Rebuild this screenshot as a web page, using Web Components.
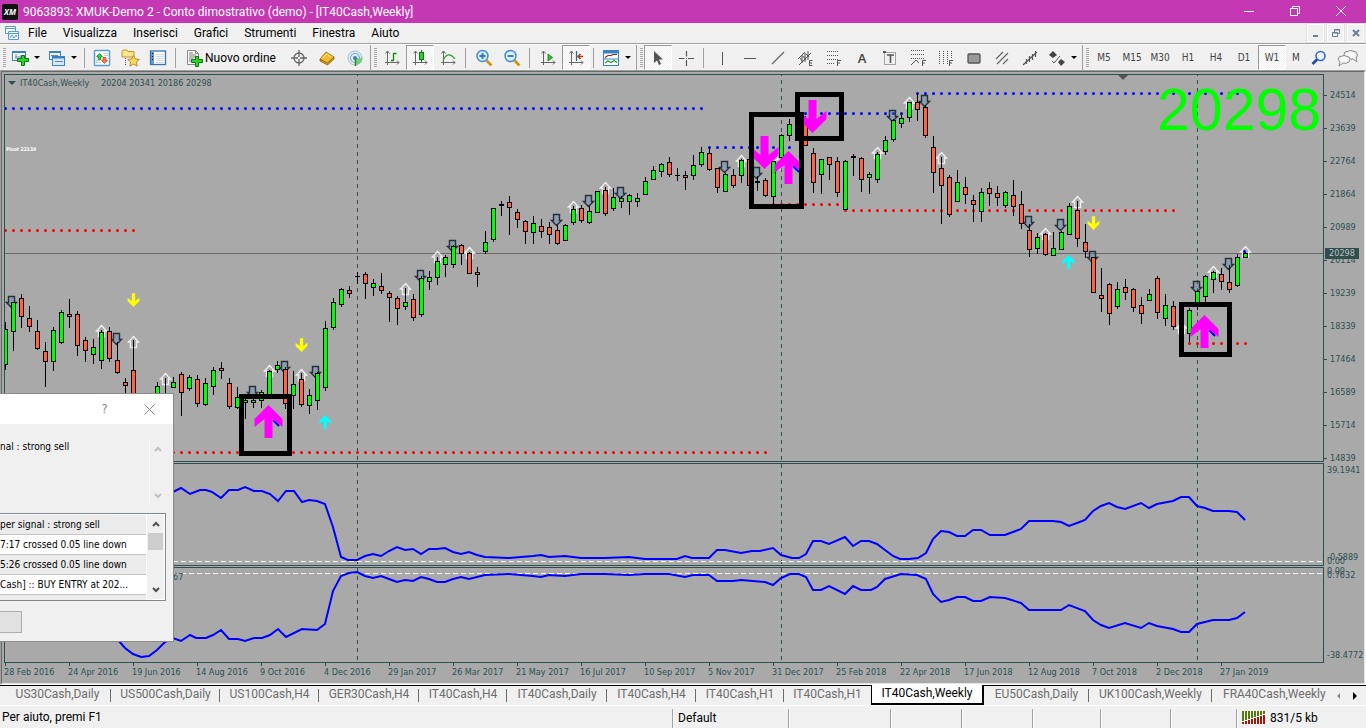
<!DOCTYPE html>
<html lang="it">
<head>
<meta charset="utf-8">
<title>9063893: XMUK-Demo 2 - Conto dimostrativo (demo)</title>
<style>
html,body{margin:0;height:100%}
body{background:#f0f0f0;font:12px/16px Roboto,"Open Sans",sans-serif;color:#000;overflow:hidden}
</style>
</head>
<body>
<terminal-app></terminal-app>
<script>
const element=(name,css,html,setup)=>customElements.define(name,class extends HTMLElement{
  connectedCallback(){
    if(this.shadowRoot)return;
    const t=document.createElement('template');
    t.innerHTML='<style>*{box-sizing:border-box}button{font:inherit;color:inherit;background:none;border:0;padding:0;margin:0}svg{display:block}'+css+'</style>'+(typeof html==='function'?html(this):html);
    this.attachShadow({mode:'open'}).append(t.content.cloneNode(true));
    if(setup)setup(this,this.shadowRoot);
  }
});

/* ---------- icons ---------- */
const AX='<path d="M3.5 1v14M1 12.5h14M1.500 3.500 3.500 1l2 2.500M13 10.500l2 2-2 2" fill="none" stroke="#666"/>';
const icons={
newchart:'<rect x=".5" y="1.500" width="13" height="9" fill="#fff" stroke="#3b7fc4"/><path d="M1 2h12" stroke="#3b7fc4" stroke-width="2"/><path d="M3 7h8M4 4v5M9 5v3" stroke="#5b8ab5"/><path d="M9.500 5.500h3v3h4v3h-4v4h-3v-4h-4v-3h4z" fill="#2ed32e" stroke="#0b7a0b"/>',
profiles:'<rect x=".5" y="1.500" width="11" height="8" fill="#eaf4fd" stroke="#3b7fc4"/><path d="M1 2h10" stroke="#3b7fc4" stroke-width="2"/><rect x="3.500" y="6.500" width="12" height="9" fill="#d7eafa" stroke="#3b7fc4"/><path d="M4 7.500h11" stroke="#3b7fc4" stroke-width="2"/><path d="M6 11.500h8M2 5.500h7" stroke="#5b8ab5"/>',
market:'<rect x=".5" y=".5" width="15" height="15" rx="1" fill="#fff" stroke="#5a9bd8" stroke-width="1.500"/><path d="M9 3.500h5M10 5.500h4M2 10.500h4M2 12.500h5" stroke="#bcd"/><path d="M5.500 3.500 8.500 6.500H7v3H4v-3H2.500z" fill="#2ecc2e" stroke="#0b7a0b" stroke-width=".6"/><path d="M10.500 13.500 7.500 10.500H9v-3h3v3h1.500z" fill="#ff7a3c" stroke="#a32a00" stroke-width=".6"/>',
star:'<path d="M0 1.500Q0 0 1.500 0H5l1 1.500h6V7H0z" fill="#ffe58a" stroke="#b8962e"/><path d="M3.500 8v8" stroke="#555" stroke-dasharray="1 1"/><path d="M11.500 5.500l1.900 3.500 3.900.5-2.900 2.600.8 4-3.700-2-3.700 2 .8-4L5.700 9.500 9.600 9z" fill="#ffd75a" stroke="#a87a10" stroke-width=".8"/>',
navigator:'<rect x=".5" y="1" width="15" height="13.500" fill="#fff" stroke="#3a72a8" stroke-width="1.300"/><path d="M2.500 2v12" stroke="#5f9bd8" stroke-width="3"/><path d="M6 4.500h8M6 6.500h8M6 8.500h8M6 10.500h8M6 12.500h8" stroke="#cfdbe8"/><path d="M2.500 3v9" stroke="#000" stroke-dasharray="1 2"/>',
order:'<path d="M1.500.5h8l3 3v11h-11z" fill="#fff" stroke="#888"/><path d="M9.500.5v3h3" fill="none" stroke="#888"/><path d="M3 5h7M3 7h7M3 9h4M3 11h4M3 3h4" stroke="#777"/><path d="M9.500 6.500h3v3h4v3h-4v4h-3v-4h-4v-3h4z" fill="#2ed32e" stroke="#0b7a0b"/>',
target:'<circle cx="8" cy="8" r="5" fill="none" stroke="#666" stroke-width="1.300"/><path d="M8 0v7M8 9v7M0 8h7M9 8h7" stroke="#666" stroke-width="1.300"/>',
book:'<path d="M1 9 7 2l8 5-6.500 7z" fill="#f1bb35" stroke="#b07a10"/><path d="M1 9v2l7.500 4L15 9V7l-6.500 6z" fill="#d49a28" stroke="#8a5c06" stroke-width=".8"/><path d="M3 8.500 7.500 4l5 3" fill="none" stroke="#ffe49a"/>',
signal:'<circle cx="8" cy="8" r="7" fill="#dfeaf2" stroke="#a3bfd6"/><circle cx="8" cy="8" r="4.500" fill="none" stroke="#7fb0d4" stroke-width="1.200"/><path d="M9 8h6.500A7 7 0 0 1 9 15z" fill="#7cc87c"/><circle cx="8" cy="8" r="2" fill="#3b7fbf"/><path d="M8.500 9v7" stroke="#2b8a2b" stroke-width="1.500"/>',
bars:AX+'<path d="M9.500 3v8M9.500 3.500h3M7 10.500h2.500" stroke="#0a8a0a" stroke-width="1.300"/>',
candles:AX+'<path d="M9.500 0v12" stroke="#0a7a0a"/><rect x="7.500" y="2.500" width="4" height="7" fill="#2ed32e" stroke="#0a7a0a"/>',
line:AX+'<path d="M3 10.500Q8 0 15 9" fill="none" stroke="#2a9a2a" stroke-width="1.200"/>',
zoomin:'<circle cx="6.500" cy="6" r="5.500" fill="#d6efff" stroke="#3f87cc" stroke-width="1.400"/><path d="m10.500 10.500 5 5" stroke="#c79a1b" stroke-width="2.800"/><path d="M6.500 3v6M3.500 6h6" stroke="#2f77bd" stroke-width="1.800"/>',
zoomout:'<circle cx="6.500" cy="6" r="5.500" fill="#d6efff" stroke="#3f87cc" stroke-width="1.400"/><path d="m10.500 10.500 5 5" stroke="#c79a1b" stroke-width="2.800"/><path d="M3.500 6h6" stroke="#2f77bd" stroke-width="1.800"/>',
scroll:AX+'<path d="M8 4v7l4.500-3.500z" fill="#35c435" stroke="#0a7a0a" stroke-width=".8"/>',
shift:AX+'<path d="M8.500 1v10" stroke="#1c6a9e" stroke-width="1.300"/><path d="M15 6.500h-5M12.500 4 10 6.500 12.500 9" stroke="#b33a10" fill="none" stroke-width="1.500"/>',
template:'<rect x=".5" y=".5" width="15" height="15" fill="#fff" stroke="#3b7fc4"/><path d="M0 2h16" stroke="#3b7fc4" stroke-width="3"/><path d="M1 9h14" stroke="#3b7fc4"/><path d="M2 7.500l3-2h3l2-1h4" fill="none" stroke="#8a2a10" stroke-width="1.200"/><path d="M2 13l3-2 3 1.500 3-2 3 2" fill="none" stroke="#1c9a1c" stroke-width="1.200"/>',
cursor:'<path d="M4 1v12l3-2.500 2 4.500 2-1-2-4.500h4z" fill="#555"/>',
cross:'<path d="M8.500 1v5.500M8.500 10v6M1 8.500h5.500M10 8.500h6M8 8.500h1" stroke="#555" stroke-width="1.200"/>',
vline:'<path d="M8.500 2v13" stroke="#555"/>',
hline:'<path d="M2 8.500h12" stroke="#555"/>',
trend:'<path d="m2 14 12-12" stroke="#666" stroke-width="1.300"/>',
channel:'<path d="M0 9 7 2M1 15 13 3M4 5v8M7 3v9M10 1v9M2 8l3 4M5 6l3 4M8 4l3 3" stroke="#555" fill="none"/><path d="M14.500 10.500h-3v5h3M11.500 13h2.500" fill="none" stroke="#555"/>',
fibo:'<path d="M1 1.500h12M1 5.500h12M1 9.500h12M1 13.500h8" stroke="#555" stroke-dasharray="1 1"/><path d="M11.500 16v-5.500h3.500M11.500 13h2.500" fill="none" stroke="#555"/>',
label:'<path d="M2.500 2.500h11v12h-11z" fill="none" stroke="#555" stroke-dasharray="1 1"/><path d="M5 5h7M8.500 5v8" stroke="#555" stroke-width="1.600"/><path d="M1 1h3v2H1z" fill="#555"/>',
fan:'<path d="M1 .5h14M1 4.500h14M1 8.500h14" stroke="#555" stroke-dasharray="1 1"/><path d="m1 15 5-5 3 3M12.500 16v-5.500h3.500M12.500 13h2.500" fill="none" stroke="#555"/>',
fibtime:'<path d="M1.500 1v14M5.500 1v14M9.500 1v14M13.500 1v8" stroke="#555" stroke-dasharray="1 1"/><path d="M11.500 16v-5.500h3.500M11.500 13h2.500" fill="none" stroke="#555"/>',
rect:'<rect x="2" y="4" width="12" height="9" rx="1" fill="#999" stroke="#555" stroke-width="1.300"/>',
hatch:'<path d="m2 9 7-7M3 14 14 3M9 14l5-5" stroke="#666" stroke-width="1.200"/>',
andrews:'<path d="M1 15 15 2M4.500 9v5M7.500 6v6M10.500 4v6M13.500 1v6" stroke="#555" fill="none" stroke-width="1.200"/>',
arrows:'<path d="m4 1 4 4-4 3-4-3zM12 9l4 3-4 4-3-4z" fill="#444"/><path d="m3 11 2 2 6-7" fill="none" stroke="#555"/>',
search:'<circle cx="9.500" cy="6" r="4.500" fill="#eef4ff" stroke="#3568c8" stroke-width="1.600"/><path d="M6 9.500 1.500 14" stroke="#1b48ae" stroke-width="2.600"/>',
chat:'<path d="M8 2q6-3 11 0 3 3 0 6l1 4-4-3q-5 1-8-2-2-3 0-5z" fill="#f6f6f6" stroke="#888"/><path d="M2 7q5-3 10 0 2 3 0 5-3 2-6 1l-4 3 1-4q-3-2-1-5z" fill="#fafafa" stroke="#888"/>'
};
const icon=(n,w=16)=>`<svg width="${w}" height="16" viewBox="0 0 ${w} 16" overflow="visible" aria-hidden="true">${icons[n]}</svg>`;

/* ---------- window title and menu ---------- */
element('title-bar',`:host{display:flex;height:23px;background:#c538b4;color:#fff;align-items:center;padding-left:2px}
.logo{width:16px;height:16px;background:#111;border-radius:2px;color:#fff;font:italic bold 8px/16px "Open Sans",sans-serif;text-align:center;margin-right:5px}
h1{font:inherit;margin:0;flex:1;white-space:nowrap}nav{display:flex;margin:0 2px 2px 0}button{width:46px;height:20px;display:grid;place-items:center}`,
`<span class="logo">XM</span><h1>9063893: XMUK-Demo 2 - Conto dimostrativo (demo) - [IT40Cash,Weekly]</h1>
<nav><button aria-label="Riduci"><svg width="10" height="10"><path d="M0 5.500h10" stroke="#fff"/></svg></button>
<button aria-label="Ripristina"><svg width="10" height="10" fill="none" stroke="#fff"><path d="M.5 2.500h7v7h-7zM2.500 2.500v-2h7v7h-2"/></svg></button>
<button aria-label="Chiudi"><svg width="10" height="10"><path d="m0 0 10 10M10 0 0 10" stroke="#fff"/></svg></button></nav>`);

element('menu-bar',`:host{display:flex;height:20px;align-items:center;padding-left:5px}
nav{display:flex;gap:16px;flex:1;margin-left:9px}.mdi{display:flex;gap:3px;padding-right:2px}.mdi button{width:17px;height:18px;border:1px solid #fff;background:#f0f0f0;display:grid;place-items:center;box-shadow:0 0 0 1px #e3e3e3}`,
`<svg width="14" height="14" fill="none" stroke="#5b9bd5"><path d="M.5.5h10v7H.5zM.500 2.500h10" fill="#fff"/><path d="M3.500 5.500h10v8h-10zM3.500 7.500h10" fill="#eef6ff"/><path d="m5 12 2-3 2 3 2-3 1 2"/></svg>
<nav><button>File</button><button>Visualizza</button><button>Inserisci</button><button>Grafici</button><button>Strumenti</button><button>Finestra</button><button>Aiuto</button></nav>
<div class="mdi"><button aria-label="Riduci grafico"><svg width="8" height="8"><path d="M1 7h5" stroke="#6b7f93" stroke-width="2"/></svg></button>
<button aria-label="Ripristina grafico"><svg width="8" height="8" fill="none" stroke="#6b7f93"><path d="M.5 3.500h5v4h-5zM.500 4h5M2.500 3V.5h5v4H6M2.500 1h5"/></svg></button>
<button aria-label="Chiudi grafico"><svg width="8" height="8"><path d="m1 1 6 6M7 1 1 7" stroke="#6b7f93" stroke-width="2"/></svg></button></div>`);

/* ---------- toolbar ---------- */
element('tool-button',`:host{display:block;width:28px;height:25px}:host([menu]){width:37px}:host([wide]){width:106px}
button{width:100%;height:100%;display:flex;align-items:center;justify-content:center;gap:6px;color:#444;white-space:nowrap}
:host([menu]) button:after{content:"";border:3px solid transparent;border-top-color:#000;border-bottom:0}
:host([wide]) button{color:#000;gap:3px;justify-content:start;padding-left:7px}
:host([pressed]) button{border:1px solid #999;border-right-color:#fff;border-bottom-color:#fff;background:repeating-conic-gradient(#f0f0f0 0 25%,#fff 0 50%) 0 0/2px 2px}`,
`<button><slot></slot></button>`,(h,r)=>{r.querySelector('button').setAttribute('aria-label',h.getAttribute('label')||h.textContent.trim());
 if(h.hasAttribute('pressed'))r.querySelector('button').setAttribute('aria-pressed','true')});
const tb=(n,label,attr='')=>`<tool-button label="${label}" ${attr}>${icon(n)}</tool-button>`;
const tf=(n,attr='')=>`<tool-button ${attr}>${n}</tool-button>`;
element('tool-bar',`:host{display:flex;height:27px;border-top:1px solid #a0a0a0;box-shadow:inset 0 1px #fff;padding-top:1px;overflow:hidden}
section{display:flex;align-items:center;border-right:1px solid #a0a0a0;padding-right:1px;flex:none}
section:last-child{border:0;flex:1}
.grip{width:3px;height:19px;margin:0 1px 0 3px;background:repeating-linear-gradient(#aaa 0 1px,#f0f0f0 1px 2px)}
i{width:1px;height:20px;background:#a0a0a0;margin:0 3px}section~section i{margin-right:4px}
.tf{font:10px/12px "DejaVu Sans Condensed","DejaVu Sans",sans-serif;display:flex}
.end{display:flex;flex:1;justify-content:space-between;padding-right:6px;padding-left:2px}.end tool-button{width:22px}.clip{width:20px}b{font:13px/16px "Open Sans",sans-serif;font-weight:600}`,
`<section><span class="grip"></span>${tb('newchart','Nuovo grafico','menu')}${tb('profiles','Profili','menu')}<i></i>${tb('market','Market Watch')}${tb('star','Preferiti')}${tb('navigator','Navigatore')}<i></i>
<tool-button wide label="Nuovo ordine">${icon('order')}<span>Nuovo ordine</span></tool-button>${tb('target','Mirino')}${tb('book','Storico')}${tb('signal','Segnali')}</section>
<section><span class="grip"></span>${tb('bars','Barre')}${tb('candles','Candele','pressed')}${tb('line','Linea')}<i></i>${tb('zoomin','Ingrandisci')}${tb('zoomout','Riduci')}<i></i>${tb('scroll','Scorrimento')}${tb('shift','Spostamento','pressed')}<i></i>${tb('template','Modelli','menu')}</section>
<section><span class="grip"></span>${tb('cursor','Cursore','pressed')}${tb('cross','Croce')}<i></i>${tb('vline','Linea verticale')}${tb('hline','Linea orizzontale')}${tb('trend','Linea di tendenza')}${tb('channel','Canale')}${tb('fibo','Fibonacci')}<tool-button><b>A</b></tool-button>${tb('label','Etichetta')}${tb('fan','Ventaglio')}${tb('fibtime','Tempo Fibonacci')}${tb('rect','Rettangolo')}${tb('hatch','Canali')}${tb('andrews','Andrews')}${tb('arrows','Frecce','menu')}</section>
<section><span class="grip"></span><div class="tf">${tf('M5')}${tf('M15')}${tf('M30')}${tf('H1')}${tf('H4')}${tf('D1')}${tf('W1','pressed')}<tool-button class="clip">M</tool-button></div><div class="end">${tb('search','Cerca')}<tool-button label="Chat">${icon('chat',22)}</tool-button></div></section>`);

/* ---------- chart data: [open side, high, body top, body bottom, low], one bar every 8px ---------- */
const bars=`G322 329 365 370|G302 302 332 351|R294 298 317 328|R306 318 327 332|R320 331 349 350|R342 351 362 387|G327 330 362 371|G310 312 343 344|R299 314 317 328|R311 314 346 356|R337 340 351 362|G339 347 355 364|G330 332 361 369|R327 331 359 362|R342 360 373 374|R378 382 386 394|R340 370 404 410||
|G382 386 404 410|G378 395 400 410|G377 382 388 388|R372 374 393 416|G375 377 389 391|R375 379 404 407|G378 383 405 406|G367 370 387 395|R362 368 371 379|R378 383 407 409|G387 397 408 409|G395 400 403 419|G398 400 403 408|G390 392 401 408|G370 371 397 399|G361 365 370 373|R367 369 404 409|G371 384 396 409|R373 379 405 407|G389 395 406 414|G372 373 401 410|G321 328 388 391
|G298 302 328 330|G288 289 305 307|R286 290 294 298|D272 276 277 284|R272 274 284 299|G279 283 288 296|R273 286 291 294|R291 293 298 322|R296 298 309 325|G288 302 307 310|R294 299 318 321|G276 278 315 317|G271 277 282 290|G257 261 278 285|G255 257 265 277|G245 246 265 268|R244 245 254 265|R252 253 274 274|R267 272 275 287|G231 242 252 254|G208 208 240 242|D201 204 206 216|R196 202 208 235|R209 212 220 228|R220 221 232 244|G216 223 233 244|R219 226 232 238|R222 227 235 244|R225 230 244 245|G224 225 241 241|G206 209 223 225|R205 208 221 223|G206 211 223 224|G191 191 213 213|R187 190 214 216|G188 197 209 211|G196 198 202 208|G194 195 202 215|G193 198 202 207
|G177 181 195 195|G166 170 180 180|G163 164 172 177|R157 162 175 177|D168 175 176 181|R171 175 178 190|G155 165 176 180|G147 152 165 167|R147 153 170 171|R168 168 188 193|G173 174 192 192|R169 175 186 188|G159 160 176 183|R159 159 186 186|D176 181 183 191|R178 180 196 197|G161 161 197 204|G134 135 158 164|G119 124 136 141||R116 119 146 146|R148 153 183 193|G159 159 175 194|R157 157 165 180|R157 161 193 197|G160 161 210 210|D154 156 158 176|R157 158 180 192|G172 174 178 194|G152 154 180 183|G136 140 152 155|G119 120 140 142|G113 118 124 128|G102 102 118 122|R93 102 110 121|R105 107 136 138|R136 147 173 193|R157 168 186 224|R175 177 215 217|G170 182 202 202
|R177 187 195 204|R195 200 205 222|G188 192 212 222|R182 188 194 206|R186 193 198 206|G191 192 206 208|R180 195 207 216|R191 204 224 229|R224 230 250 257|G233 237 249 254|R233 234 255 256|G232 248 256 256|G231 232 250 250|G203 206 235 235|R201 210 239 247|R224 242 252 258|R257 257 293 293|R268 295 299 312|R283 284 314 325|G282 289 307 309|R279 287 293 300|R288 289 308 312|R297 305 314 324|G289 294 301 301|R276 278 313 319|G294 305 319 326|R301 306 327 330||G308 310 334 342|G290 291 305 310|G275 276 297 302|G271 272 280 293|R268 274 282 290|R265 282 290 293|G254 257 286 287|G252 253 258 258`.replace(/\n/g,'').split('|');
const drawBars=()=>bars.map((b,i)=>{ if(!b)return''; const x=5+8*i,[h,t,d,l]=b.slice(1).split(' ').map(Number),c=b[0];
  return `<path d="M${x+.5} ${h}V${l}" stroke="#000"/>`+(c==='D'?`<path d="M${x-2} ${t}h5v${d-t}h-5z"/>`:`<rect x="${x-1.5}" y="${t+.5}" width="4" height="${Math.max(2,d-t-1)}" fill="${c==='G'?'#0f0':'#ff6347'}" stroke="#000"/>`)}).join('');
const dots=(y,a,b,c)=>`<path d="M${a+.5} ${y+.5}H${b+1}" stroke="${c}" stroke-width="3" stroke-linecap="round" stroke-dasharray="0 8"/>`;
const up=[[101,325],[133,336],[165,373],[269,365],[301,369],[405,283],[437,251],[469,247],[573,201],[605,182],[741,155],[777,158],[877,147],[909,97],[941,152],[1045,228],[1077,196],[1181,322],[1213,266],[1245,246]];
const down=[[11,296],[116,333],[252,386],[284,361],[315,366],[420,270],[452,240],[556,214],[588,195],[620,187],[724,161],[756,167],[892,110],[924,95],[1028,216],[1060,219],[1092,251],[1196,281],[1228,258]];
const arrow='M0 0 14 14V22L4 14V33H-4V14L-14 22V14Z';
const big=(x,y,dir,c,s)=>`<path d="${arrow}" transform="translate(${x} ${y}) scale(${s} ${dir*s})" fill="${c}"/>`;
const vlines='<path d="M357.500 0V900M781.500 0V900M1197.500 0V900" stroke="#2f4f4f" stroke-dasharray="4 4"/>';
const box=(x,y,w,h)=>`<rect x="${x+2.5}" y="${y+2.5}" width="${w-5}" height="${h-5}" fill="none" stroke="#000" stroke-width="5"/>`;

const panelCss=`:host{display:flex;min-height:0}.plot{flex:1;min-width:0;border:1px solid #2f4f4f;position:relative;overflow:hidden}.plot svg{width:100%;height:100%}
.axis{width:40px;position:relative;color:#2f4f4f;font:9px/11px "DejaVu Sans Condensed","DejaVu Sans",sans-serif}
text{font-family:"DejaVu Sans Condensed","DejaVu Sans",sans-serif}`;
element('price-panel',panelCss+`:host{flex:1}.axis ul{list-style:none;margin:0;padding:5px 0 0;height:0}.axis li{height:33px;display:flex;align-items:center;gap:3px}.axis li:before{content:"";width:3px;height:1px;background:#2f4f4f}
output{position:absolute;left:1px;top:174px;width:34px;background:#2f4f4f;color:#c0c0c0;text-align:center}`,
()=>`<div class="plot"><svg><g transform="translate(-5 -75)">
<path d="M8 81h8l-4 4z" fill="#2f4f4f"/><text x="20" y="86" font-size="9" fill="#2f4f4f">IT40Cash,Weekly</text><text x="101" y="86" font-size="9" fill="#2f4f4f">20204 20341 20186 20298</text>
<path d="M1118 75h10l-5 5z" fill="#555"/><text x="6" y="151" font-size="5" font-weight="bold" fill="#fff">Pivot 22139</text>
${vlines}<path d="M5 253.500H2000" stroke="#696969"/>
${dots(108,5,701,'#00f')}${dots(147,709,789,'#00f')}${dots(113,797,901,'#00f')}${dots(93,917,1237,'#00f')}
${dots(230,5,133,'#f00')}${dots(452,173,765,'#f00')}${dots(204,773,837,'#f00')}${dots(210,845,1173,'#f00')}${dots(343,1189,1245,'#f00')}
<g fill="none" stroke="#eee" stroke-width="1.400">${up.map(([x,y])=>`<path d="M${x+.5} ${y+.5}l5 5.500h-2v5.500h-6v-5.500h-2z"/>`).join('')}</g>
<g fill="#4682b4" fill-opacity=".3" stroke="#26303c" stroke-width="1.400">${down.map(([x,y])=>`<path d="M${x-2.500} ${y+.5}h6v6h2l-5 5-5-5h2z"/>`).join('')}</g>
${drawBars()}<circle cx="1244.500" cy="251.500" r="1.500" fill="#00f"/>
${big(133.5,307,-1,'#ff0',.42)}${big(301.5,352,-1,'#ff0',.42)}${big(1093.5,230,-1,'#ff0',.42)}${big(325,415,1,'#0ff',.42)}${big(1068.5,255,1,'#0ff',.42)}
<path d="m273 420 6 6M793 166l6 6M1209 330l6 6" stroke="#00f" stroke-width="2"/>
${big(268.5,405,1,'#f0f',1)}${big(788.5,151,1,'#f0f',1)}${big(1204.5,315,1,'#f0f',1)}${big(764.5,169,-1,'#f0f',1)}${big(812.5,133,-1,'#f0f',1)}
${box(239,394,53,62)}${box(749,112,55,97)}${box(795,92,49,49)}${box(1179,302,53,55)}
<text x="1157" y="130" font-size="59" fill="#0f0" style="font-family:'Liberation Sans',sans-serif">20298</text>
</g></svg></div><div class="axis"><ul>${[24514,23639,22764,21864,20989,20114,19239,18339,17464,16589,15714,14839].map(v=>`<li>${v}</li>`).join('')}</ul><output>20298</output></div>`);

const osc1='120 484 133 471 141 469 149 470 157 475 165 484 173 492 181 488 190 494 200 490 206 490 212 492 221 498 229 490 238 490 245 487 254 491 262 491 270 494 278 501 286 491 294 491 302 502 309 500 317 501 325 504 333 527 341 557 348 560 357 560 365 556 373 554 381 556 389 551 397 547 405 550 413 549 421 554 429 549 437 549 445 548 453 552 461 554 469 552 477 555 485 557 509 558 533 556 541 555 549 557 565 556 581 558 605 558 629 557 645 559 660 559 677 559 685 556 692 558 709 558 717 550 725 550 741 553 752 551 760 551 773 548 781 555 792 558 799 558 806 554 813 541 821 541 829 544 845 537 853 546 861 541 869 541 877 544 885 550 893 556 900 559 909 559 918 558 926 553 933 539 941 531 949 532 957 536 965 536 973 530 981 530 990 535 1005 535 1013 532 1021 529 1029 521 1053 521 1061 522 1069 526 1077 523 1085 520 1093 511 1101 506 1109 503 1117 507 1125 509 1141 503 1149 508 1157 504 1173 501 1181 497 1189 497 1197 506 1205 508 1213 511 1229 511 1237 512 1245 520';
const osc2='118 640 125 648 133 654 141 657 149 656 157 650 165 642 173 638 181 641 190 635 196 638 206 638 213 635 221 630 229 639 238 639 245 641 254 638 262 638 270 635 278 629 286 637 302 629 317 630 325 624 333 591 341 576 349 573 357 572 365 576 373 578 381 576 389 579 397 582 405 580 413 581 421 577 429 579 437 582 445 582 453 579 461 577 469 579 477 577 485 575 509 574 533 576 541 577 549 575 565 576 581 574 605 574 629 575 645 574 669 574 685 577 693 575 709 575 717 581 733 581 741 580 765 582 773 585 781 578 790 574 799 574 806 577 813 590 821 590 829 586 845 594 853 586 861 590 871 590 877 587 885 579 901 574 917 575 926 579 933 594 941 602 949 600 957 597 965 597 973 601 981 601 990 597 1005 598 1021 603 1029 610 1061 610 1069 605 1085 611 1093 620 1101 625 1109 628 1125 623 1141 628 1149 623 1157 626 1173 629 1181 632 1189 632 1197 624 1213 620 1229 620 1237 618 1245 612';
const osc=(pts,level,top,note='')=>`<div class="plot"><svg><g transform="translate(-5 -${top})">${vlines}<path d="M5 ${level}.5H2000" stroke="#fff" stroke-dasharray="5 3"/>${note}<polyline points="${pts}" fill="none" stroke="#00f" stroke-width="2"/></g></svg></div>`;
const oscCss=panelCss+`.axis span{position:absolute;left:3px}`;
element('upper-oscillator',oscCss+`:host{height:103px}`,()=>osc(osc1,561,464)+`<div class="axis"><span style="top:2px">39.1941</span><span style="bottom:3px">-0.5889</span><span style="bottom:-1px">0.00</span></div>`);
element('lower-oscillator',oscCss+`:host{height:96px}`,()=>osc(osc2,573,568,'<text x="173" y="580" font-size="9" fill="#2f4f4f">67</text>')+`<div class="axis"><span style="top:-1px">0.00</span><span style="top:3px">0.7632</span><span style="bottom:2px">-38.4772</span></div>`);
element('time-axis',`:host{display:flex;height:20px;overflow:hidden;color:#2f4f4f;font:9px/12px "DejaVu Sans Condensed","DejaVu Sans",sans-serif}
span{flex:none;width:64px;white-space:nowrap}span:before{content:"";display:block;width:1px;height:3px;margin-left:1px;background:#2f4f4f}`,
()=>'28 Feb 2016,24 Apr 2016,19 Jun 2016,14 Aug 2016,9 Oct 2016,4 Dec 2016,29 Jan 2017,26 Mar 2017,21 May 2017,16 Jul 2017,10 Sep 2017,5 Nov 2017,31 Dec 2017,25 Feb 2018,22 Apr 2018,17 Jun 2018,12 Aug 2018,7 Oct 2018,2 Dec 2018,27 Jan 2019'.split(',').map(d=>`<span>${d}</span>`).join(''));
element('chart-window',`:host{display:flex;flex-direction:column;flex:1;min-height:0;background:#a9a9a9;border:1px solid;border-color:#a0a0a0 #fff #fff #a0a0a0}
.in{flex:1;min-height:0;display:flex;flex-direction:column;gap:1px;border:1px solid #696969;border-right-color:#e3e3e3;border-bottom-color:#e3e3e3;padding:2px 0 0 2px}time-axis{margin-top:-1px}`,
`<div class="in"><price-panel></price-panel><upper-oscillator></upper-oscillator><lower-oscillator></lower-oscillator><time-axis></time-axis></div>`);

/* ---------- alert dialog, partly off the left edge of the screen ---------- */
element('alert-dialog',`:host{position:absolute;left:0;bottom:86px;width:174px;height:249px;background:#f0f0f0;border:1px solid #8a8a8a;border-left:0;display:flex;flex-direction:column;font:10px/20px "DejaVu Sans Condensed","DejaVu Sans",sans-serif}
header{background:#fff;height:30px;display:flex;justify-content:flex-end;align-items:center;padding-right:1px;font-size:13px;color:#888}header button{width:45px;height:28px;display:grid;place-items:center}
.msg{display:flex;height:65px;margin:16px 8px 8px 0;}.msg p{margin:-3px 0 0;flex:1}.sb{width:16px;display:flex;flex-direction:column;align-items:center;justify-content:space-between;padding:6px 0}
.msg .sb{border-left:1px solid #fff}
.list{display:flex;height:88px;margin-right:7px;border:1px solid #82878f;border-left:0;background:#fff;padding:1px 1px 1px 0;overflow:hidden}
ul{list-style:none;margin:0;padding:0;flex:1;min-width:0;background:#fff}li{height:20px;border-bottom:1px solid #c4c4c4;white-space:nowrap}li:nth-child(odd){background:#ebebeb}
.list .sb{background:#f0f0f0;width:17px;justify-content:flex-start;margin-left:1px}.list .sb b{width:15px;height:17px;background:#cdcdcd;margin:6px 0 auto}
.ok{width:22px;height:22px;margin-top:10px;background:#e1e1e1;border:1px solid #adadad;border-left:0}`,
`<header><button aria-label="Guida">?</button><button aria-label="Chiudi"><svg width="11" height="11"><path d="m.5.5 10 10m0-10-10 10" stroke="#888"/></svg></button></header>
<div class="msg"><p>nal : strong sell</p><div class="sb"><svg width="8" height="6"><path d="m1 5 3-3 3 3" fill="none" stroke="#c0c0c0" stroke-width="2"/></svg><svg width="8" height="6"><path d="m1 1 3 3 3-3" fill="none" stroke="#c0c0c0" stroke-width="2"/></svg></div></div>
<div class="list"><ul><li>per signal : strong sell</li><li>7:17 crossed 0.05 line down</li><li>5:26 crossed 0.05 line down</li><li>Cash] :: BUY ENTRY at 202...</li><li></li></ul><div class="sb"><svg width="8" height="6"><path d="m1 5 3-3 3 3" fill="none" stroke="#505050" stroke-width="2"/></svg><b></b><svg width="8" height="6"><path d="m1 1 3 3 3-3" fill="none" stroke="#505050" stroke-width="2"/></svg></div></div>
<button class="ok" aria-label="OK"></button>`);

/* ---------- chart tabs and status bar ---------- */
element('chart-tabs',`:host{display:grid;grid-template-columns:107px 109px 99px 100px 88px 100px 89px 88px 87px 113px 105px 123px 1fr 32px;height:20px;border-top:1px solid #000;padding-left:4px;color:#6d6d6d}
button{white-space:nowrap;position:relative;line-height:17px;padding-bottom:2px}button:not(.on):not(.pre):not(.last):after{content:"";position:absolute;right:0;top:3px;height:13px;width:1px;background:#6d6d6d}
.on{background:#fff;color:#000;border:solid #000;border-width:0 2px 2px 1px;margin-top:-1px;height:20px}.last{text-align:left;padding-left:11px}nav{display:flex;gap:13px;align-items:center;padding-left:2px}`,
()=>['US30Cash,Daily','US500Cash,Daily','US100Cash,H4','GER30Cash,H4','IT40Cash,H4','IT40Cash,Daily','IT40Cash,H4','IT40Cash,H1','IT40Cash,H1','IT40Cash,Weekly','EU50Cash,Daily','UK100Cash,Weekly','FRA40Cash,Weekly'].map((t,i)=>`<button class="${i===9?'on':i===8?'pre':i===12?'last':''}">${t}</button>`).join('')+
`<nav><svg width="4" height="8"><path d="M4 1v6L1 4z" fill="#888"/></svg><svg width="4" height="8"><path d="M0 0v8l4-4z"/></svg></nav>`);
element('status-bar',`:host{display:flex;height:23px;border-top:1px solid #fff;line-height:23px;padding-left:2px}
span{border-left:1px solid #a0a0a0;box-shadow:inset 1px 0 #fff;margin-top:3px;line-height:18px}.h{flex:1}svg{margin:1px 4px 0 5px}.n{display:flex;width:130px}`,
()=>`<div class="h">Per aiuto, premi F1</div><span style="width:116px;padding-left:5px">Default</span><span style="width:102px"></span><span style="width:71px"></span><span style="width:71px"></span><span style="width:68px"></span><span style="width:70px"></span><span style="width:66px"></span><span class="n"><svg width="24" height="14">${[...Array(8)].map((_,i)=>`<path d="M${i*3+1} 1v${10-i}" stroke="#5a7a10" stroke-width="2"/><path d="M${i*3+1} ${12-i}v${2+i}" stroke="#9a1c0c" stroke-width="2"/>`).join('')}</svg>831/5 kb</span>`);

element('terminal-app',`:host{display:flex;flex-direction:column;min-height:100vh;position:relative}chart-window{flex:1}`,
`<title-bar></title-bar><menu-bar></menu-bar><tool-bar></tool-bar><chart-window></chart-window><chart-tabs></chart-tabs><status-bar></status-bar><alert-dialog></alert-dialog>`);
</script>
</body>
</html>
